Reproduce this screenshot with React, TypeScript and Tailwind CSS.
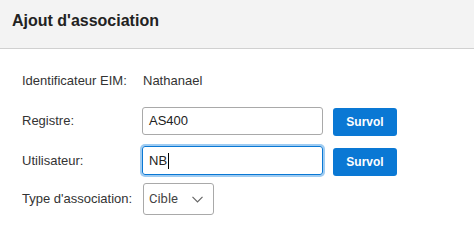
import React from "react";

function SurvolButton() {
  return (
    <button className="h-[28px] w-[64px] rounded-[3px] bg-[#0a78d4] text-[12px] font-bold text-white">
      Survol
    </button>
  );
}

export default function App() {
  return (
    <div className="h-[247px] w-[474px] bg-white text-[13px] text-[#333]" style={{ fontFamily: '"Liberation Sans", Arial, sans-serif' }}>
      {/* Header */}
      <div className="h-[49px] border-b border-[#d0d0d0] bg-[#f3f3f3] pl-[12px] pt-[12px]">
        <h1 className="text-[16px] font-bold leading-[18px] text-[#222]">Ajout d'association</h1>
      </div>

      {/* Form */}
      <div className="pl-[22px] pt-[22px]">
        <div className="flex h-[20px] items-center">
          <span className="w-[121px]">Identificateur EIM:</span>
          <span>Nathanael</span>
        </div>

        <div className="mt-[16px] flex h-[28px] items-center">
          <span className="w-[120px]">Registre:</span>
          <div className="flex h-[28px] w-[181px] items-center rounded-[3px] border border-[#a9a9a9] pl-[6px] text-[#222]">
            AS400
          </div>
          <div className="ml-[10px] mt-[1px]">
            <SurvolButton />
          </div>
        </div>

        <div className="mt-[11px] flex h-[29px] items-center">
          <span className="w-[120px]">Utilisateur:</span>
          <div className="flex h-[29px] w-[181px] items-center rounded-[3px] border border-[#0a78d4] pl-[6px] text-[#222] ring-2 ring-[#9fccf2]">
            NB
            <span className="ml-[1px] h-[16px] w-[1px] bg-black" />
          </div>
          <div className="ml-[10px] mt-[2px]">
            <SurvolButton />
          </div>
        </div>

        <div className="mt-[8px] flex h-[32px] items-center">
          <span className="w-[121px]">Type d'association:</span>
          <div className="flex h-[32px] w-[71px] items-center justify-between rounded-[3px] border border-[#a9a9a9] pl-[5px] pr-[10px] text-[#444]" style={{ fontFamily: "Roboto, sans-serif" }}>
            <span className="text-[13px]">Cible</span>
            <svg width="11" height="7" viewBox="0 0 11 7" fill="none">
              <path d="M0.5 0.8 L5.5 5.8 L10.5 0.8" stroke="#666" strokeWidth="1.2" />
            </svg>
          </div>
        </div>
      </div>
    </div>
  );
}
